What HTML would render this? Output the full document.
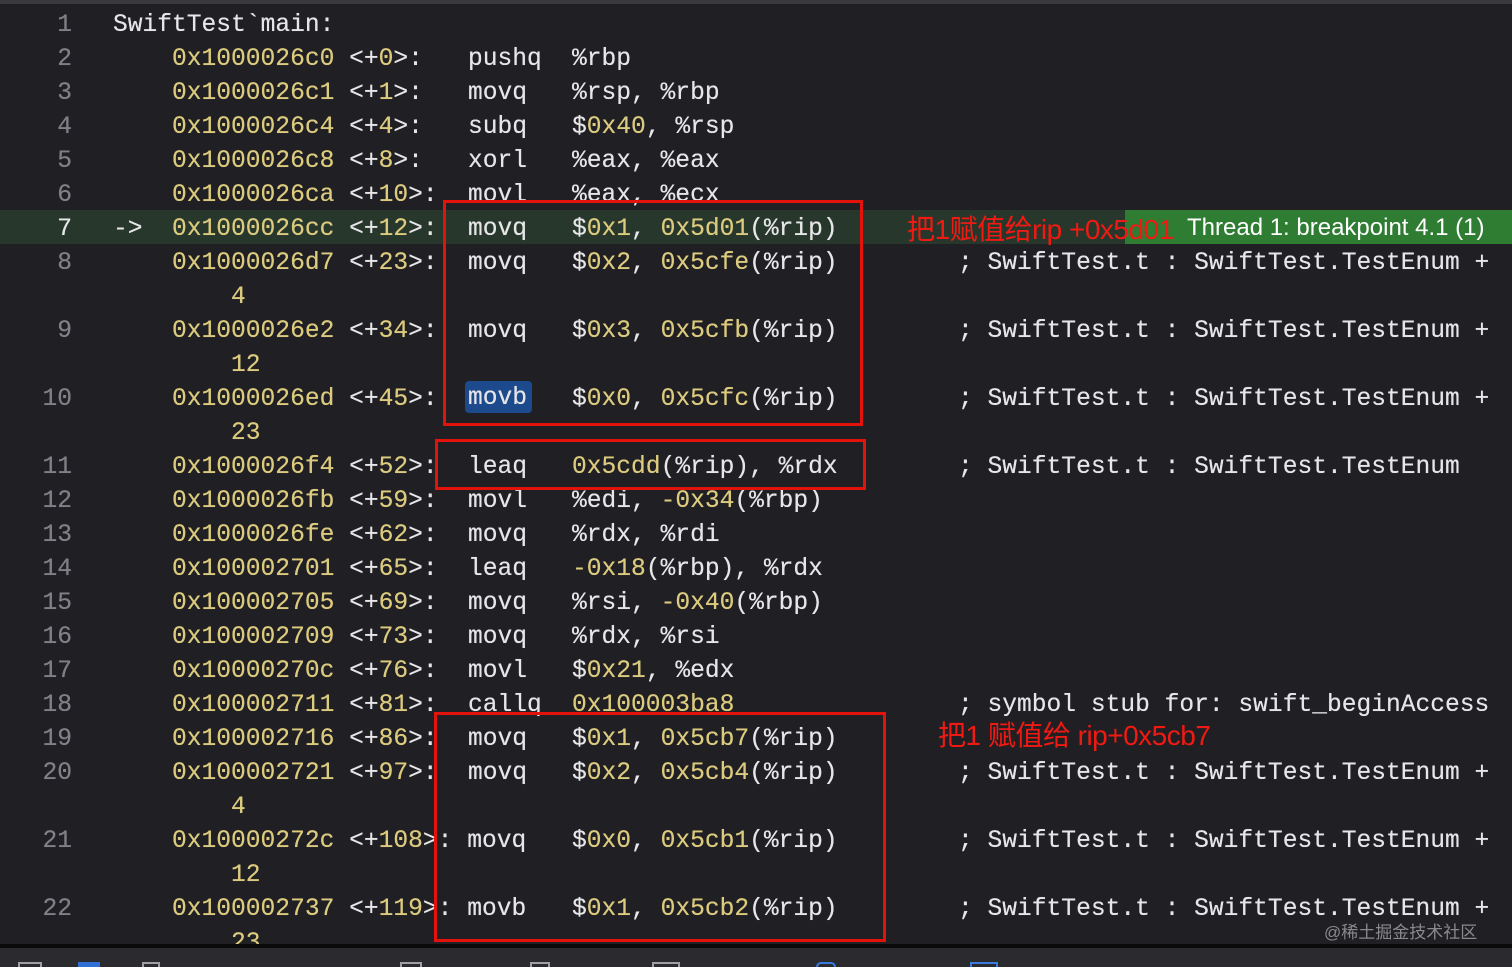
<!DOCTYPE html>
<html><head><meta charset="utf-8"><style>
body{margin:0;width:1512px;height:967px;overflow:hidden;background:#1f1f24;position:relative;font-family:"Liberation Mono",monospace;font-size:24.6px;color:#e6e6e8}
.top{position:absolute;left:0;top:0;width:1512px;height:4px;background:#3a3a3e}
.r{position:absolute;left:0;width:1512px;height:34px;line-height:34px;white-space:pre}
.r span{position:absolute;top:3px;text-shadow:0 0 0.4px currentColor}
.n{color:#808086;width:72px;text-align:right;left:0}
i{font-style:normal}
.y,.r i{color:#dccb7e}
.cur{background:#27372c}
.box{position:absolute;border:3px solid #e3120b;box-sizing:border-box}
.red{position:absolute;color:#f01a12;font-family:"Liberation Sans","Noto Sans CJK SC",sans-serif;font-size:28px;white-space:nowrap;letter-spacing:-0.5px}
.badge{position:absolute;left:1125px;top:210px;width:387px;height:34px;background:#2f7d33;color:#fff;font-family:"Liberation Sans",sans-serif;font-size:24px;line-height:36px}
.bar{position:absolute;left:0;top:944px;width:1512px;height:4px;background:#0a0a0a}
.tb{position:absolute;left:0;top:948px;width:1512px;height:19px;background:#2b2b2f}
.ic{position:absolute;top:962px;height:5px;border:2px solid #a0a0a4;border-bottom:none;box-sizing:border-box}
</style></head><body>
<div class="top"></div>
<div class="r cur" style="top:210px"></div>
<div class="badge"><span style="margin-left:62px">Thread 1: breakpoint 4.1 (1)</span></div>

<div class="r" style="top:6px"><span class="n">1</span><span style="left:113px">SwiftTest`main:</span></div>
<div class="r" style="top:40px"><span class="n">2</span><span style="left:172px"><i>0x1000026c0</i> &lt;+<i>0</i>&gt;:</span><span style="left:468px">pushq</span><span style="left:572px">%rbp</span></div>
<div class="r" style="top:74px"><span class="n">3</span><span style="left:172px"><i>0x1000026c1</i> &lt;+<i>1</i>&gt;:</span><span style="left:468px">movq</span><span style="left:572px">%rsp, %rbp</span></div>
<div class="r" style="top:108px"><span class="n">4</span><span style="left:172px"><i>0x1000026c4</i> &lt;+<i>4</i>&gt;:</span><span style="left:468px">subq</span><span style="left:572px">$<i>0x40</i>, %rsp</span></div>
<div class="r" style="top:142px"><span class="n">5</span><span style="left:172px"><i>0x1000026c8</i> &lt;+<i>8</i>&gt;:</span><span style="left:468px">xorl</span><span style="left:572px">%eax, %eax</span></div>
<div class="r" style="top:176px"><span class="n">6</span><span style="left:172px"><i>0x1000026ca</i> &lt;+<i>10</i>&gt;:</span><span style="left:468px">movl</span><span style="left:572px">%eax, %ecx</span></div>
<div class="r" style="top:210px"><span class="n" style="color:#e6e6e8">7</span><span style="left:113px">-&gt;</span><span style="left:172px"><i>0x1000026cc</i> &lt;+<i>12</i>&gt;:</span><span style="left:468px">movq</span><span style="left:572px">$<i>0x1</i>, <i>0x5d01</i>(%rip)</span></div>
<div class="r" style="top:244px"><span class="n">8</span><span style="left:172px"><i>0x1000026d7</i> &lt;+<i>23</i>&gt;:</span><span style="left:468px">movq</span><span style="left:572px">$<i>0x2</i>, <i>0x5cfe</i>(%rip)</span><span style="left:958px">; SwiftTest.t : SwiftTest.TestEnum +</span></div>
<div class="r" style="top:278px"><span class="y" style="left:231px">4</span></div>
<div class="r" style="top:312px"><span class="n">9</span><span style="left:172px"><i>0x1000026e2</i> &lt;+<i>34</i>&gt;:</span><span style="left:468px">movq</span><span style="left:572px">$<i>0x3</i>, <i>0x5cfb</i>(%rip)</span><span style="left:958px">; SwiftTest.t : SwiftTest.TestEnum +</span></div>
<div class="r" style="top:346px"><span class="y" style="left:231px">12</span></div>
<div class="r" style="top:380px"><span class="n">10</span><span style="left:172px"><i>0x1000026ed</i> &lt;+<i>45</i>&gt;:</span><span style="left:465px;top:1px;height:32px;line-height:36px;width:67px;background:#1d4a8c;border-radius:4px;padding-left:3px;box-sizing:border-box">movb</span><span style="left:572px">$<i>0x0</i>, <i>0x5cfc</i>(%rip)</span><span style="left:958px">; SwiftTest.t : SwiftTest.TestEnum +</span></div>
<div class="r" style="top:414px"><span class="y" style="left:231px">23</span></div>
<div class="r" style="top:448px"><span class="n">11</span><span style="left:172px"><i>0x1000026f4</i> &lt;+<i>52</i>&gt;:</span><span style="left:468px">leaq</span><span style="left:572px"><i>0x5cdd</i>(%rip), %rdx</span><span style="left:958px">; SwiftTest.t : SwiftTest.TestEnum</span></div>
<div class="r" style="top:482px"><span class="n">12</span><span style="left:172px"><i>0x1000026fb</i> &lt;+<i>59</i>&gt;:</span><span style="left:468px">movl</span><span style="left:572px">%edi, <i>-0x34</i>(%rbp)</span></div>
<div class="r" style="top:516px"><span class="n">13</span><span style="left:172px"><i>0x1000026fe</i> &lt;+<i>62</i>&gt;:</span><span style="left:468px">movq</span><span style="left:572px">%rdx, %rdi</span></div>
<div class="r" style="top:550px"><span class="n">14</span><span style="left:172px"><i>0x100002701</i> &lt;+<i>65</i>&gt;:</span><span style="left:468px">leaq</span><span style="left:572px"><i>-0x18</i>(%rbp), %rdx</span></div>
<div class="r" style="top:584px"><span class="n">15</span><span style="left:172px"><i>0x100002705</i> &lt;+<i>69</i>&gt;:</span><span style="left:468px">movq</span><span style="left:572px">%rsi, <i>-0x40</i>(%rbp)</span></div>
<div class="r" style="top:618px"><span class="n">16</span><span style="left:172px"><i>0x100002709</i> &lt;+<i>73</i>&gt;:</span><span style="left:468px">movq</span><span style="left:572px">%rdx, %rsi</span></div>
<div class="r" style="top:652px"><span class="n">17</span><span style="left:172px"><i>0x10000270c</i> &lt;+<i>76</i>&gt;:</span><span style="left:468px">movl</span><span style="left:572px">$<i>0x21</i>, %edx</span></div>
<div class="r" style="top:686px"><span class="n">18</span><span style="left:172px"><i>0x100002711</i> &lt;+<i>81</i>&gt;:</span><span style="left:468px">callq</span><span style="left:572px"><i>0x100003ba8</i></span><span style="left:958px">; symbol stub for: swift_beginAccess</span></div>
<div class="r" style="top:720px"><span class="n">19</span><span style="left:172px"><i>0x100002716</i> &lt;+<i>86</i>&gt;:</span><span style="left:468px">movq</span><span style="left:572px">$<i>0x1</i>, <i>0x5cb7</i>(%rip)</span></div>
<div class="r" style="top:754px"><span class="n">20</span><span style="left:172px"><i>0x100002721</i> &lt;+<i>97</i>&gt;:</span><span style="left:468px">movq</span><span style="left:572px">$<i>0x2</i>, <i>0x5cb4</i>(%rip)</span><span style="left:958px">; SwiftTest.t : SwiftTest.TestEnum +</span></div>
<div class="r" style="top:788px"><span class="y" style="left:231px">4</span></div>
<div class="r" style="top:822px"><span class="n">21</span><span style="left:172px"><i>0x10000272c</i> &lt;+<i>108</i>&gt;: movq</span><span style="left:572px">$<i>0x0</i>, <i>0x5cb1</i>(%rip)</span><span style="left:958px">; SwiftTest.t : SwiftTest.TestEnum +</span></div>
<div class="r" style="top:856px"><span class="y" style="left:231px">12</span></div>
<div class="r" style="top:890px"><span class="n">22</span><span style="left:172px"><i>0x100002737</i> &lt;+<i>119</i>&gt;: movb</span><span style="left:572px">$<i>0x1</i>, <i>0x5cb2</i>(%rip)</span><span style="left:958px">; SwiftTest.t : SwiftTest.TestEnum +</span></div>
<div class="r" style="top:924px"><span class="y" style="left:231px">23</span></div>

<div class="box" style="left:443px;top:200px;width:420px;height:226px"></div>
<div class="box" style="left:435px;top:439px;width:431px;height:51px"></div>
<div class="box" style="left:434px;top:712px;width:452px;height:230px"></div>
<div class="red" style="left:907px;top:208px">把1赋值给rip +0x5d01</div>
<div class="red" style="left:938px;top:714px">把1 赋值给 rip+0x5cb7</div>
<div style="position:absolute;left:1324px;top:918px;color:#8a8a8e;font-family:'Liberation Sans','Noto Sans CJK SC',sans-serif;font-size:17px">@稀土掘金技术社区</div>

<div class="bar"></div>
<div class="tb"></div>
<div class="ic" style="left:18px;width:24px"></div>
<div class="ic" style="left:78px;width:22px;background:#2f6fd6;border-color:#2f6fd6"></div>
<div class="ic" style="left:142px;width:18px"></div>
<div class="ic" style="left:400px;width:22px"></div>
<div class="ic" style="left:530px;width:20px"></div>
<div class="ic" style="left:652px;width:28px"></div>
<div class="ic" style="left:816px;width:20px;border-radius:10px 10px 0 0;border-color:#3a7be0"></div>
<div class="ic" style="left:970px;width:28px;border-color:#3a7be0"></div>
</body></html>
